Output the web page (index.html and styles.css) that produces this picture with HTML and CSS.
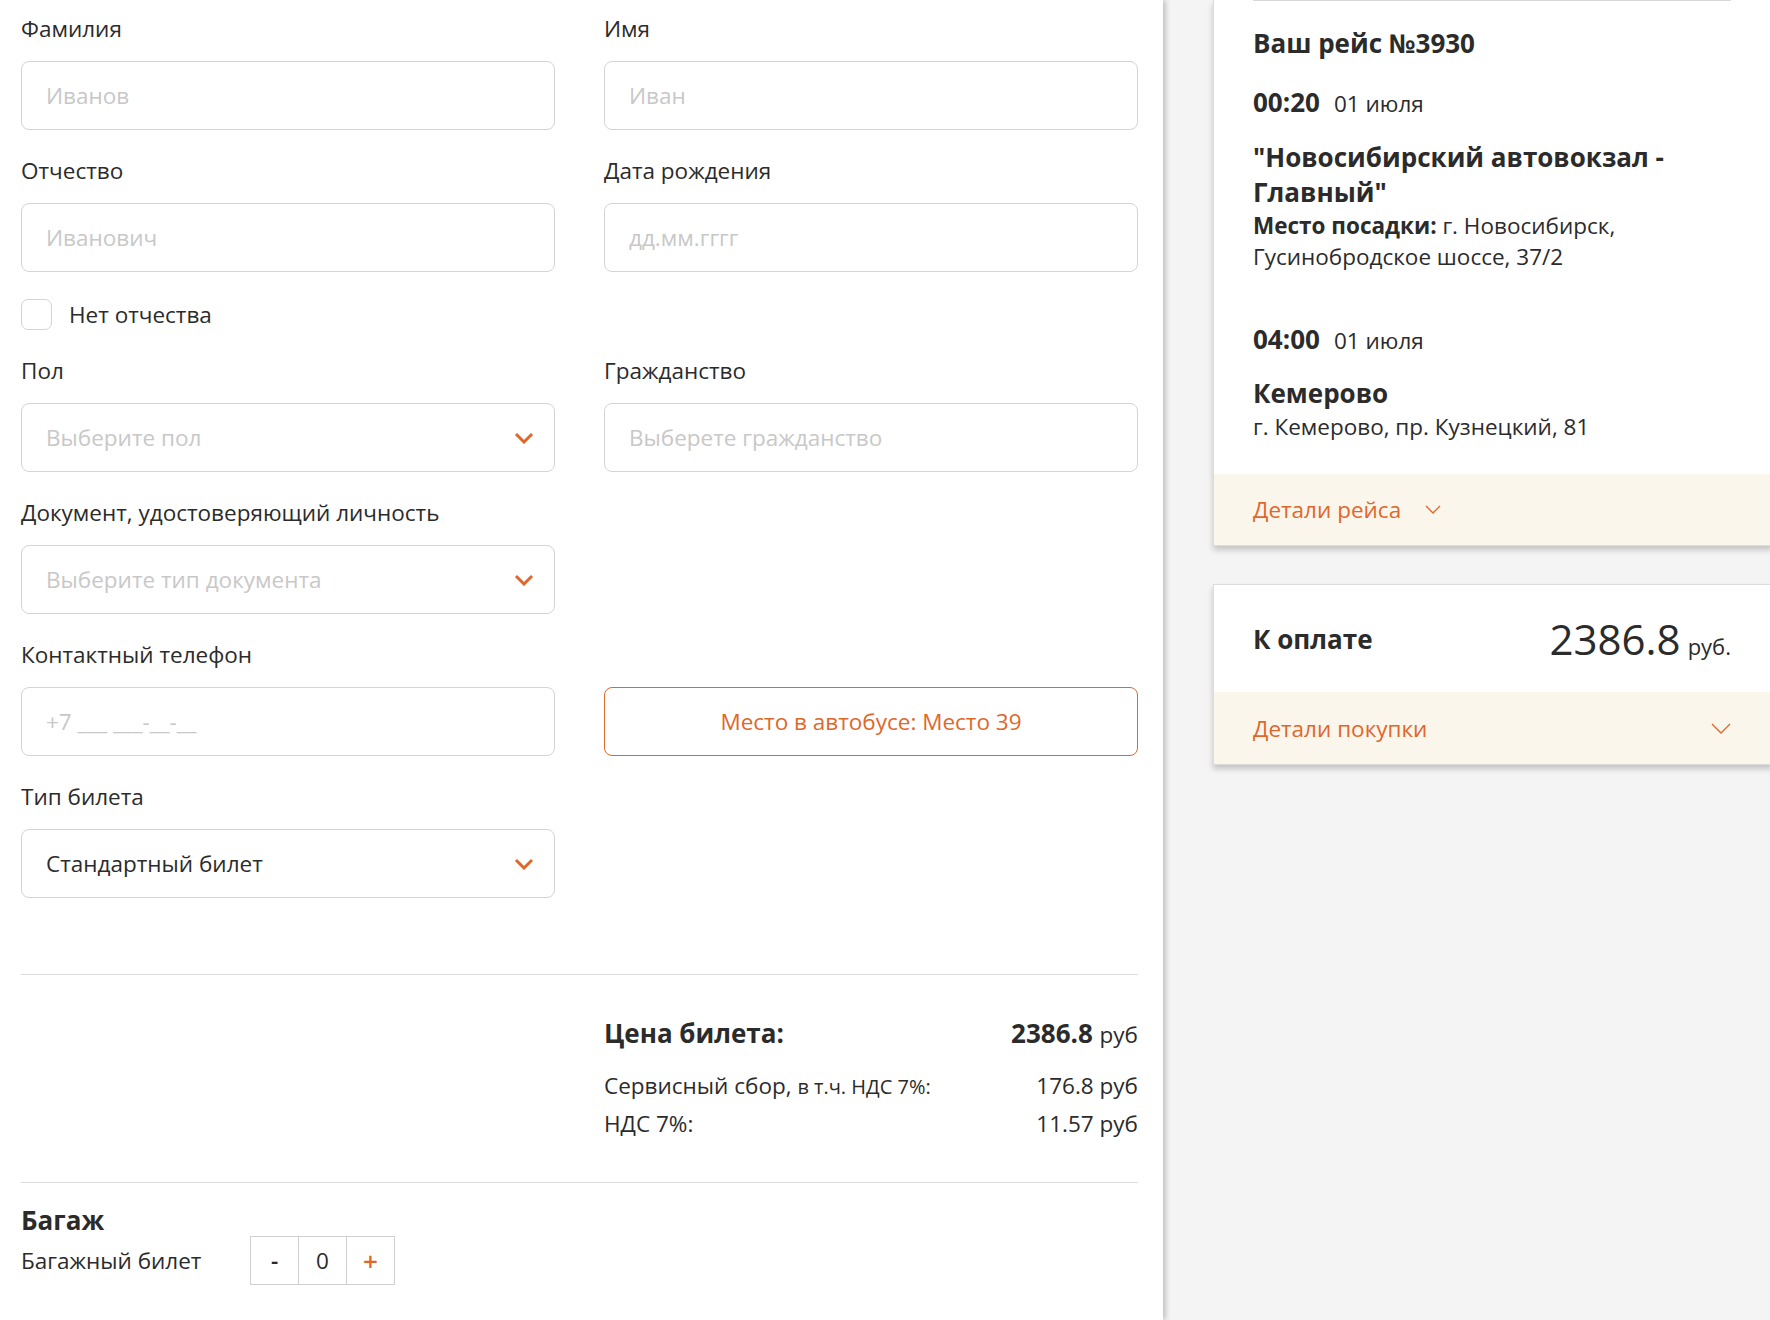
FILE: index.html
```html
<!DOCTYPE html>
<html lang="ru">
<head>
<meta charset="utf-8">
<title>Оформление билета</title>
<link rel="stylesheet" href="styles.css">
</head>
<body>
<div class="page">

<main class="form-panel">
	<div class="form-grid">
		<div class="field">
			<label class="label">Фамилия</label>
			<input class="input" placeholder="Иванов">
		</div>
		<div class="field">
			<label class="label">Имя</label>
			<input class="input" placeholder="Иван">
		</div>
		<div class="field">
			<label class="label">Отчество</label>
			<input class="input" placeholder="Иванович">
		</div>
		<div class="field">
			<label class="label">Дата рождения</label>
			<input class="input" placeholder="дд.мм.гггг">
		</div>
		<div class="check-row">
			<span class="check"></span>
			<span>Нет отчества</span>
		</div>
		<div class="field left">
			<label class="label">Пол</label>
			<div class="input select empty">Выберите пол
				<svg class="chev" width="20" height="12" viewBox="0 0 20 12"><path d="M2 2 L10 10 L18 2" /></svg>
			</div>
		</div>
		<div class="field">
			<label class="label">Гражданство</label>
			<input class="input" placeholder="Выберете гражданство">
		</div>
		<div class="field left">
			<label class="label">Документ, удостоверяющий личность</label>
			<div class="input select empty">Выберите тип документа
				<svg class="chev" width="20" height="12" viewBox="0 0 20 12"><path d="M2 2 L10 10 L18 2" /></svg>
			</div>
		</div>
		<div class="field left">
			<label class="label">Контактный телефон</label>
			<input class="input" placeholder="+7 ___ ___-__-__">
		</div>
		<button class="seat-btn">Место в автобусе: Место 39</button>
		<div class="field left">
			<label class="label">Тип билета</label>
			<div class="input select">Стандартный билет
				<svg class="chev" width="20" height="12" viewBox="0 0 20 12"><path d="M2 2 L10 10 L18 2" /></svg>
			</div>
		</div>
	</div>

	<hr class="divider first">

	<div class="price-grid">
		<div class="price">
			<div class="price-head">
				<span>Цена билета:</span>
				<span>2386.8 <small>руб</small></span>
			</div>
			<div class="price-row first">
				<span>Сервисный сбор, <small>в т.ч. НДС 7%:</small></span>
				<span>176.8 руб</span>
			</div>
			<div class="price-row">
				<span>НДС 7%:</span>
				<span>11.57 руб</span>
			</div>
		</div>
	</div>

	<hr class="divider second">

	<h3 class="bag-title">Багаж</h3>
	<div class="bag-row">
		<span class="bag-label">Багажный билет</span>
		<div class="counter">
			<span class="cnt-btn">-</span>
			<span class="cnt-val">0</span>
			<span class="cnt-btn plus">+</span>
		</div>
	</div>
</main>

<aside class="side">
	<div class="card trip-card">
		<div class="trip">
			<div class="trip-title">Ваш рейс №3930</div>
			<div class="time-row"><b>00:20</b><span class="date">01 июля</span></div>
			<div class="station">"Новосибирский автовокзал - Главный"</div>
			<div class="addr"><b>Место посадки:</b> г. Новосибирск, Гусинобродское шоссе, 37/2</div>
			<div class="time-row arrive"><b>04:00</b><span class="date">01 июля</span></div>
			<div class="station second">Кемерово</div>
			<div class="addr">г. Кемерово, пр. Кузнецкий, 81</div>
		</div>
		<div class="card-foot">
			<span>Детали рейса</span>
			<svg width="16" height="9" viewBox="0 0 16 9"><path d="M1 1 L8 8 L15 1" /></svg>
		</div>
	</div>

	<div class="card pay-card">
		<div class="pay-head">
			<span class="pay-title">К оплате</span>
			<span><span class="pay-sum">2386.8</span><span class="pay-cur">руб.</span></span>
		</div>
		<div class="card-foot spread">
			<span>Детали покупки</span>
			<svg width="20" height="11" viewBox="0 0 20 11"><path d="M1 1 L10 10 L19 1" /></svg>
		</div>
	</div>
</aside>

</div>
</body>
</html>
```
FILE: styles.css
```css
body {
	margin: 0;
	background: #f4f4f4;
	font-family: "Open Sans", "Liberation Sans", sans-serif;
	font-size: 22.5px;
	color: #2b2b2b;
	overflow: hidden;
}

.page {
	display: flex;
	align-items: flex-start;
	min-height: 1320px;
}

/* left form */
.form-panel {
	flex: none;
	width: 1163px;
	min-height: 1320px;
	box-sizing: border-box;
	padding: 15px 25px 0 21px;
	background: #fff;
	box-shadow: 3px 0 5px rgba(0,0,0,.2);
	position: relative;
	z-index: 1;
}

.form-grid {
	display: grid;
	grid-template-columns: 534px 534px;
	column-gap: 49px;
	row-gap: 27px;
	align-items: start;
}
.left { grid-column: 1; }

.label {
	display: block;
	line-height: 28px;
	margin-bottom: 18px;
}

.input {
	display: flex;
	align-items: center;
	justify-content: space-between;
	box-sizing: border-box;
	width: 100%;
	height: 69px;
	padding: 0 20px 0 24px;
	border: 1px solid #d4d4d4;
	border-radius: 8px;
	background: #fff;
	font: 22.5px "Open Sans", sans-serif;
	color: #2b2b2b;
	outline: none;
}
.input::placeholder { color: #c8c8c8; }
.select.empty { color: #c8c8c8; }
.chev { fill: none; stroke: #e0672b; stroke-width: 3; }

.check-row {
	grid-column: 1;
	display: flex;
	align-items: center;
	gap: 17px;
	line-height: 31px;
}
.check {
	width: 31px;
	height: 31px;
	box-sizing: border-box;
	border: 1px solid #d4d4d4;
	border-radius: 7px;
}

.seat-btn {
	align-self: end;
	height: 69px;
	border: 1.5px solid #e0672b;
	border-radius: 8px;
	background: #fff;
	color: #e0672b;
	font: 22.5px "Open Sans", sans-serif;
}

.divider {
	border: 0;
	border-top: 1px solid #dcdcdc;
	margin: 0;
}
.divider.first { margin-top: 76px; }
.divider.second { margin-top: 40px; }

.price-grid {
	display: grid;
	grid-template-columns: 534px 534px;
	column-gap: 49px;
}
.price { grid-column: 2; padding-top: 41px; }
.price-head {
	display: flex;
	justify-content: space-between;
	font-size: 26px;
	font-weight: 700;
	line-height: 34px;
}
.price-head small { font-size: 22.5px; font-weight: 400; }
.price-row {
	display: flex;
	justify-content: space-between;
	line-height: 37px;
}
.price-row.first { margin-top: 15px; }
.price-row small { font-size: 20px; }

.bag-title {
	margin: 21px 0 0;
	font-size: 26px;
	line-height: 32px;
}
.bag-row {
	display: flex;
	align-items: center;
}
.bag-label { width: 229px; }
.counter {
	display: flex;
	border: 1px solid #d0d0d0;
}
.cnt-btn, .cnt-val {
	width: 47px;
	height: 47px;
	display: flex;
	align-items: center;
	justify-content: center;
}
.cnt-btn { font-weight: 600; }
.cnt-val { border-left: 1px solid #d0d0d0; border-right: 1px solid #d0d0d0; }
.cnt-btn.plus { color: #e0672b; font-size: 26px; }

/* right column */
.side {
	flex: none;
	padding-left: 50px;
}
.card {
	width: 560px;
	box-sizing: border-box;
	background: #fff;
	border: 1px solid #dcdcdc;
	box-shadow: 0 4px 6px rgba(0,0,0,.2);
}
.trip-card { border-top: 0; }

.trip {
	width: 478px;
	margin-left: 39px;
	padding: 25px 0 32px;
	border-top: 1px solid #d8d8d8;
}
.trip-title {
	font-size: 26px;
	font-weight: 700;
	line-height: 34px;
}
.time-row { margin-top: 25px; line-height: 34px; }
.time-row b { font-size: 26px; }
.time-row .date { margin-left: 14px; }
.time-row.arrive { margin-top: 50px; }
.station {
	margin-top: 19px;
	font-size: 26px;
	font-weight: 700;
	line-height: 35px;
}
.station.second { margin-top: 18px; }
.addr { line-height: 31px; }

.card-foot {
	display: flex;
	align-items: center;
	gap: 24px;
	height: 71px;
	padding: 0 39px;
	background: #fbf6ec;
	color: #e0672b;
}
.card-foot svg { fill: none; stroke: #e0672b; stroke-width: 1.4; }
.card-foot.spread {
	justify-content: space-between;
	height: 72px;
	width: 478px;
	padding-right: 41px;
}

.pay-card { margin-top: 38px; }
.pay-head {
	display: flex;
	align-items: center;
	justify-content: space-between;
	width: 478px;
	height: 107px;
	padding-left: 39px;
}
.pay-title { font-size: 26px; font-weight: 700; }
.pay-sum { font-size: 42px; }
.pay-cur { font-size: 22px; margin-left: 7px; }
```
